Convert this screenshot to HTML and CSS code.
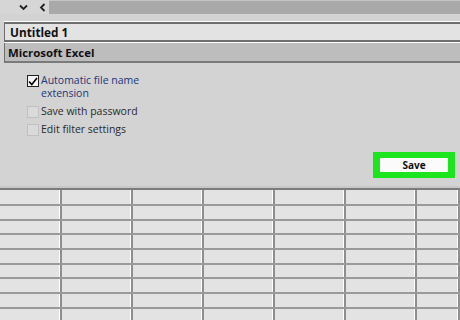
FILE: index.html
```html
<!DOCTYPE html>
<html>
<head>
<meta charset="utf-8">
<link rel="stylesheet" href="styles.css">
</head>
<body>
<div class="dialog">
  <div class="topbar">
    <div class="nav">
      <span class="chev">
        <svg width="9" height="7" viewBox="0 0 9 7"><path d="M1 1.5 L4.5 5 L8 1.5" fill="none" stroke="#222" stroke-width="1.8"/></svg>
      </span>
      <span class="chev">
        <svg width="7" height="9" viewBox="0 0 7 9"><path d="M5.5 1 L2 4.5 L5.5 8" fill="none" stroke="#222" stroke-width="1.8"/></svg>
      </span>
    </div>
    <div class="track"></div>
  </div>
  <div class="gap"></div>
  <div class="field name">Untitled 1</div>
  <div class="field type">Microsoft Excel</div>
  <div class="options">
    <label class="opt checked">
      <span class="box"><svg width="10" height="9" viewBox="0 0 10 9"><path d="M1 4.5 L3.8 7.5 L9 1" fill="none" stroke="#000" stroke-width="1.6"/></svg></span>
      <span class="lbl">Automatic file name<br>extension</span>
    </label>
    <label class="opt disabled">
      <span class="box"></span>
      <span class="lbl">Save with password</span>
    </label>
    <label class="opt disabled">
      <span class="box"></span>
      <span class="lbl">Edit filter settings</span>
    </label>
  </div>
  <div class="actions">
    <div class="highlight"><button class="save">Save</button></div>
  </div>
</div>
<div class="sheet">
  <div class="row"><div class="c"></div><div class="c"></div><div class="c"></div><div class="c"></div><div class="c"></div><div class="c"></div><div class="c"></div></div>
  <div class="row"><div class="c"></div><div class="c"></div><div class="c"></div><div class="c"></div><div class="c"></div><div class="c"></div><div class="c"></div></div>
  <div class="row"><div class="c"></div><div class="c"></div><div class="c"></div><div class="c"></div><div class="c"></div><div class="c"></div><div class="c"></div></div>
  <div class="row"><div class="c"></div><div class="c"></div><div class="c"></div><div class="c"></div><div class="c"></div><div class="c"></div><div class="c"></div></div>
  <div class="row"><div class="c"></div><div class="c"></div><div class="c"></div><div class="c"></div><div class="c"></div><div class="c"></div><div class="c"></div></div>
  <div class="row"><div class="c"></div><div class="c"></div><div class="c"></div><div class="c"></div><div class="c"></div><div class="c"></div><div class="c"></div></div>
  <div class="row"><div class="c"></div><div class="c"></div><div class="c"></div><div class="c"></div><div class="c"></div><div class="c"></div><div class="c"></div></div>
  <div class="row"><div class="c"></div><div class="c"></div><div class="c"></div><div class="c"></div><div class="c"></div><div class="c"></div><div class="c"></div></div>
  <div class="row"><div class="c"></div><div class="c"></div><div class="c"></div><div class="c"></div><div class="c"></div><div class="c"></div><div class="c"></div></div>
</div>
</body>
</html>
```
FILE: styles.css
```css
* { box-sizing: border-box; }
html, body { margin: 0; padding: 0; }
body {
  width: 460px;
  height: 320px;
  overflow: hidden;
  background: #e3e3e3;
  font-family: "Open Sans", "Noto Sans", sans-serif;
}
.dialog {
  background: #d3d3d3;
  height: 186px;
  display: flex;
  flex-direction: column;
}
.topbar {
  display: flex;
  height: 14px;
}
.nav {
  width: 49px;
  background: #d6d6d6;
  display: flex;
  align-items: center;
  padding-left: 19px;
  gap: 11px;
}
.chev { display: flex; align-items: center; }
.track {
  flex: 1;
  background: #a9a9a9;
  border-top: 1px solid #c4c4c4;
}
.gap {
  height: 8px;
  background: #d3d3d3;
}
.field {
  margin-left: 4px;
  font-weight: 700;
  color: #111;
  display: flex;
  align-items: center;
  padding-left: 5px;
}
.name {
  height: 20px;
  font-size: 11.8px;
  background: #e3e3e3;
  border-top: 2px solid #6e6e6e;
  border-left: 1px solid #6e6e6e;
  border-bottom: 2px solid #6e6e6e;
  box-shadow: 0 -1px 0 #ffffff, 0 1px 0 #ffffff;
}
.type {
  margin-top: 1px;
  height: 20px;
  font-size: 11.4px;
  background: #bdbdbd;
  border-left: 1px solid #6e6e6e;
  border-bottom: 2px solid #7a7a7a;
  padding-left: 3px;
}
.options {
  display: flex;
  flex-direction: column;
  gap: 5px;
  padding: 11px 0 0 27px;
}
.opt {
  display: flex;
  align-items: flex-start;
  gap: 2px;
  font-size: 10.5px;
  line-height: 13px;
}
.box {
  width: 12px;
  height: 12px;
  margin-top: 1px;
  display: flex;
  align-items: center;
  justify-content: center;
}
.checked .box {
  background: #f4f4f4;
  border: 1px solid #222;
}
.checked .lbl { color: #1c3778; }
.disabled .box {
  background: #dadada;
  border: 1px solid #c0c0c0;
}
.disabled .lbl { color: #2a2a2a; }
.actions {
  display: flex;
  justify-content: flex-end;
  padding: 16px 5px 0 0;
}
.highlight {
  background: #1de51d;
  padding: 6px 7px;
  width: 82px;
  height: 26px;
}
.save {
  display: block;
  width: 100%;
  height: 100%;
  border: none;
  background: #fbfbfb;
  font-family: "Open Sans", "Noto Sans", sans-serif;
  font-weight: 700;
  font-size: 10px;
  color: #111;
  padding: 0;
}
.sheet {
  border-top: 2px solid #c8c8c8;
  display: flex;
  flex-direction: column;
}
.row {
  display: grid;
  grid-template-columns: 62px 71px 71px 71px 71px 71px 43px;
  height: 14.7px;
  border-bottom: 2px solid #9a9a9a;
}
.row:first-child {
  height: 18px;
  border-top: 2px solid #7c7c7c;
}
.c {
  border-right: 2px solid #8e8e8e;
  box-shadow: inset -3px 0 0 -2px #fff;
}
```
